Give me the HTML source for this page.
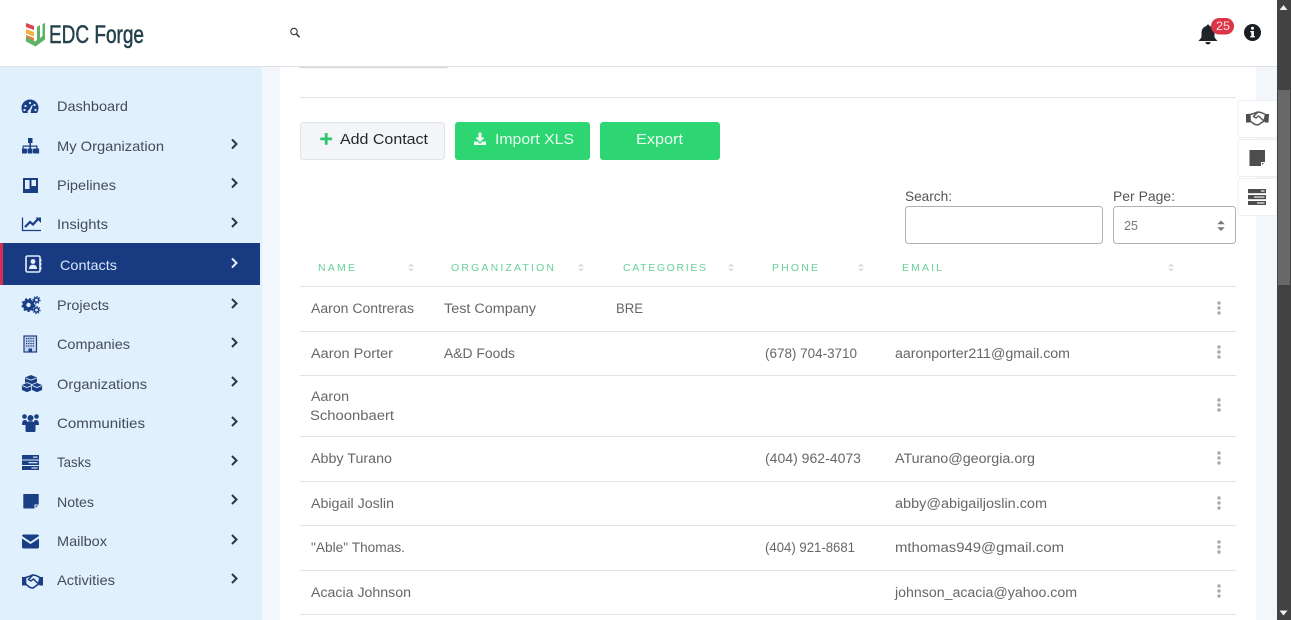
<!DOCTYPE html>
<html lang="en"><head><meta charset="utf-8"><title>EDC Forge - Contacts</title>
<style>
html,body{margin:0;padding:0;width:1291px;height:620px;overflow:hidden;background:#fff}
svg{display:block}
text{font-family:"Liberation Sans",sans-serif}
.n{font-size:14px;fill:#454b5a}
.t{font-size:13.5px;fill:#676767}
.h{font-size:10.5px;fill:#66d197}
.l{font-size:14px;fill:#555}
.b{font-size:15px;fill:#e8fbf0}
.ic{fill:#1b3f85}
.ch{fill:none;stroke:#2a3548;stroke-width:2}
.sort{fill:#d9d9d9}
.dot{fill:#aaa}
.ln{fill:#e2e2e2}
.g{fill:#4d4d4d}
</style></head><body>
<svg width="1291" height="620" viewBox="0 0 1291 620" xmlns="http://www.w3.org/2000/svg">
<rect width="1291" height="620" fill="#fff"/>
<!-- page background -->
<rect x="262" y="67" width="18" height="553" fill="#f3f6fa"/>
<rect x="1256" y="67" width="21" height="553" fill="#f3f6fa"/>
<!-- sidebar -->
<rect x="0" y="67" width="262" height="553" fill="#e1f0fd"/>
<rect x="0" y="243" width="260" height="42" fill="#173a80"/>
<rect x="0" y="243" width="3" height="42" fill="#d5304f"/>
<!-- header -->
<rect x="0" y="0" width="1277" height="66" fill="#fff"/>
<rect x="0" y="66" width="1277" height="1" fill="#dfe1e4"/>
<!-- logo -->
<path d="M26 29l8 3v4.500l-8-3z" fill="#f2b33d"/>
<path d="M26 23l8 3v4l-8-3z" fill="#d9434f"/>
<path d="M26 35l8 3v3l-8-3z" fill="#ec7a3a"/>
<path d="M45 22.500v17l-9.500 7-9.500-5v-4.500l9 4.500 2-1.500v-13l3-2v13l2.500-2v-11.500z" fill="#5cb566"/>
<text x="49" y="43" font-size="25" fill="#24414c" stroke="#24414c" stroke-width=".5" textLength="95" lengthAdjust="spacingAndGlyphs">EDC Forge</text>
<!-- search icon -->
<circle cx="294" cy="31.500" r="3.200" fill="none" stroke="#333" stroke-width="1.100"/>
<path d="M296.500 34l3 3.200" stroke="#333" stroke-width="1.500" fill="none"/>
<!-- bell -->
<path d="M1208 24.500c1 0 1.500.7 1.500 1.500 3.300.8 5 3.500 5 7v3.500c0 1.500 2 3 3 4.500h-19c1-1.500 3-3 3-4.500V33c0-3.500 1.700-6.200 5-7 0-.8.500-1.500 1.500-1.500z" fill="#1f2529"/>
<path d="M1205.500 42h5a2.500 2.500 0 0 1-5 0z" fill="#1f2529"/>
<rect x="1211" y="18" width="23" height="16.500" rx="8.200" fill="#dc3545"/>
<text x="1216" y="30" font-size="12" fill="#fbe3e6" textLength="14" lengthAdjust="spacingAndGlyphs">25</text>
<!-- info -->
<circle cx="1252.500" cy="32.500" r="8.500" fill="#1a1e22"/>
<rect x="1251.300" y="31" width="2.600" height="6.200" fill="#fff"/>
<rect x="1250.300" y="36" width="4.500" height="1.400" fill="#fff"/>
<rect x="1250.300" y="31" width="3" height="1.300" fill="#fff"/>
<circle cx="1252.500" cy="28.300" r="1.500" fill="#fff"/>
<!-- sidebar icons -->
<path class="ic" d="M30 99.500a8.500 8 0 0 0-8.500 8c0 2.200.6 4 1.500 5.500h14c.9-1.500 1.500-3.300 1.500-5.500a8.500 8 0 0 0-8.500-8z"/>
<g fill="#e1f0fd"><circle cx="30" cy="103" r="1.100"/><circle cx="25.500" cy="106" r="1.100"/><circle cx="34.500" cy="105" r="1.100"/><circle cx="24.500" cy="110" r="1.100"/><circle cx="35.500" cy="110" r="1.100"/><path d="M29 110l3-5 .8.400-2 5.600a1.700 1.700 0 1 1-1.800-1z"/></g>
<path class="ic" d="M28 138h4.500v5H31v2.500h6.500v3h1.600v5H35v-5h1.300v-1.800H31v1.800h1.300v5H28v-5h1.400v-1.800h-5.700v1.800H25v5h-3v-5h.6v-3h6.800V143H28z"/>
<rect class="ic" x="33" y="148.500" width="6" height="5" rx="1"/><rect class="ic" x="27.500" y="148.500" width="5" height="5" rx="1"/><rect class="ic" x="22" y="148.500" width="5" height="5" rx="1"/>
<path class="ic" fill-rule="evenodd" d="M23 178h15v15H23zM25 180v9h4.500v-9zM31.500 180v6H36v-6z"/>
<path d="M22.500 217.500V230.500H41" fill="none" stroke="#1b3f85" stroke-width="1.300"/>
<path d="M25 227l5-5 3 2.500 5-5.500" fill="none" stroke="#1b3f85" stroke-width="2.200"/><path class="ic" d="M35.500 217.500H41v5.500z"/>
<rect x="26" y="256" width="14" height="16" rx="1.500" fill="none" stroke="#e6eefc" stroke-width="1.600"/>
<circle cx="33" cy="261.500" r="2.400" fill="#e6eefc"/><path d="M29 269c0-3 1.500-4.300 4-4.300s4 1.300 4 4.300z" fill="#e6eefc"/>
<rect x="40" y="259" width="1.500" height="2.500" fill="#e6eefc"/><rect x="40" y="263" width="1.500" height="2.500" fill="#e6eefc"/><rect x="40" y="267" width="1.500" height="2.500" fill="#e6eefc"/>
<circle cx="28.500" cy="305" r="4" fill="none" stroke="#1b3f85" stroke-width="3.600"/>
<circle cx="28.500" cy="305" r="6.300" fill="none" stroke="#1b3f85" stroke-width="1.500" stroke-dasharray="2.200 2.100"/>
<circle cx="36.500" cy="300" r="2.200" fill="none" stroke="#1b3f85" stroke-width="1.700"/>
<circle cx="36.500" cy="310" r="2.200" fill="none" stroke="#1b3f85" stroke-width="1.700"/>
<circle cx="36.500" cy="300" r="3.600" fill="none" stroke="#1b3f85" stroke-width="1" stroke-dasharray="1.300 1.500"/>
<circle cx="36.500" cy="310" r="3.600" fill="none" stroke="#1b3f85" stroke-width="1" stroke-dasharray="1.300 1.500"/>
<rect x="24" y="336" width="12.500" height="16" fill="#c3d4ee" stroke="#1b3f85" stroke-width="1.200"/>
<path d="M26 338.500h8.500M26 341h8.500M26 343.500h8.500M26 346h8.500" stroke="#1b3f85" stroke-width="1.300" stroke-dasharray="1.300 .9"/>
<rect class="ic" x="28.500" y="348.500" width="3.500" height="3.500"/>
<path class="ic" d="M31 375l6 2.500v6l-6 2.500-6-2.500v-6z"/>
<path class="ic" d="M27 382.500l5.500 2.300v5.500l-5.500 2.300-5.500-2.300v-5.500z" stroke="#e1f0fd" stroke-width=".8"/>
<path class="ic" d="M37 382.500l5.500 2.300v5.500l-5.500 2.300-5.500-2.300v-5.500z" stroke="#e1f0fd" stroke-width=".8"/>
<path d="M25.500 378l5.500 2.200 5.500-2.200M22 385.500l5 2 5-2M32 385.500l5 2 5-2" fill="none" stroke="#e1f0fd" stroke-width=".9"/>
<circle class="ic" cx="30.500" cy="418" r="3"/><circle class="ic" cx="24.500" cy="416.500" r="2.300"/><circle class="ic" cx="36.500" cy="416.500" r="2.300"/>
<path class="ic" d="M22 425c0-3 .8-5 2.500-5 1 0 2 .4 2.500.8v4.200zM39 425c0-3-.8-5-2.500-5-1 0-2 .4-2.500.8v4.200z"/>
<path class="ic" d="M25.500 431v-6c0-2.500 1.500-3.800 5-3.800s5 1.300 5 3.800v6c0 .5-.5 1-1.500 1h-7c-1 0-1.500-.5-1.500-1z"/>
<rect class="ic" x="22" y="455" width="17" height="4.500"/><rect class="ic" x="22" y="460.500" width="17" height="4.500"/><rect class="ic" x="22" y="466" width="17" height="4"/>
<g fill="#c8d8f0"><rect x="33" y="456.500" width="4.500" height="1.300"/><rect x="28.500" y="462" width="9" height="1.300"/><rect x="31.500" y="467.300" width="6" height="1.300"/></g>
<path class="ic" d="M24 494h14c.5 0 .7.300.7.700V505l-4 3.500H24c-.5 0-.7-.3-.7-.7V494.700c0-.4.200-.7.700-.7z"/>
<path d="M35 508.500v-3.500h3.700" fill="none" stroke="#e1f0fd" stroke-width="1.100"/>
<path class="ic" d="M23.500 534.500h14c.8 0 1.500.7 1.500 1.500l-8.500 5.800L22 536c0-.8.700-1.500 1.500-1.500z"/>
<path class="ic" d="M22 538.500l8.500 5.500 8.500-5.500v8.500c0 .8-.7 1.500-1.500 1.500h-14c-.8 0-1.500-.7-1.500-1.500z"/>
<g>
<path class="ic" d="M22 577h3l1.500 6.500-1 2H22zM43 577h-3l-1.500 6.500 1 2H43z"/>
<path d="M25.500 577.500L29 576.500 32.500 575 36 575.500 40 577.500 38.500 584 33 588 30 587.500 25.500 584z" fill="none" stroke="#1b3f85" stroke-width="1.600"/>
<path d="M32.500 575.500L28.500 579.500 31 581 33.500 579 38 583.500" fill="none" stroke="#1b3f85" stroke-width="1.500"/>
</g>
<!-- chevrons -->
<g class="ch"><path d="M232 139.500l4.500 4.500-4.500 4.500"/><path d="M232 178.500l4.500 4.500-4.500 4.500"/><path d="M232 218l4.500 4.500-4.500 4.500"/><path d="M232 258.500l4.500 4.500-4.500 4.500" stroke="#e6eefc"/><path d="M232 299l4.500 4.500-4.500 4.500"/><path d="M232 338l4.500 4.500-4.500 4.500"/><path d="M232 377l4.500 4.500-4.500 4.500"/><path d="M232 417l4.500 4.500-4.500 4.500"/><path d="M232 456l4.500 4.500-4.500 4.500"/><path d="M232 495l4.500 4.500-4.500 4.500"/><path d="M232 535l4.500 4.500-4.500 4.500"/><path d="M232 574l4.500 4.500-4.500 4.500"/></g>
<!-- sidebar labels -->
<text class="n" x="57" y="111" textLength="71" lengthAdjust="spacingAndGlyphs">Dashboard</text>
<text class="n" x="57" y="151" textLength="107" lengthAdjust="spacingAndGlyphs">My Organization</text>
<text class="n" x="57" y="190" textLength="59" lengthAdjust="spacingAndGlyphs">Pipelines</text>
<text class="n" x="57" y="229" textLength="51" lengthAdjust="spacingAndGlyphs">Insights</text>
<text class="n" x="60" y="270" textLength="57" lengthAdjust="spacingAndGlyphs" style="fill:#d9e6fb">Contacts</text>
<text class="n" x="57" y="310" textLength="52" lengthAdjust="spacingAndGlyphs">Projects</text>
<text class="n" x="57" y="349" textLength="73" lengthAdjust="spacingAndGlyphs">Companies</text>
<text class="n" x="57" y="389" textLength="90" lengthAdjust="spacingAndGlyphs">Organizations</text>
<text class="n" x="57" y="428" textLength="88" lengthAdjust="spacingAndGlyphs">Communities</text>
<text class="n" x="57" y="467" textLength="34" lengthAdjust="spacingAndGlyphs">Tasks</text>
<text class="n" x="57" y="507" textLength="37" lengthAdjust="spacingAndGlyphs">Notes</text>
<text class="n" x="57" y="546" textLength="50" lengthAdjust="spacingAndGlyphs">Mailbox</text>
<text class="n" x="57" y="585" textLength="58" lengthAdjust="spacingAndGlyphs">Activities</text>
<!-- clipped button -->
<path d="M299.500 66.500c0 .8 1.500 1.200 3 1.200h142c1.500 0 3-.4 3-1.200" fill="none" stroke="#cfcfcf" stroke-width="1"/>
<rect x="300" y="97" width="936" height="1" class="ln"/>
<!-- buttons -->
<rect x="300.500" y="122.500" width="144" height="37" rx="3" fill="#f3f5f9" stroke="#dfe3ea"/>
<path d="M324.800 133h2.800v4.500h4.500v2.800h-4.500v4.500h-2.800v-4.500h-4.500v-2.800h4.500z" fill="#2fc46f"/>
<text x="340" y="144" font-size="15" fill="#24272b" textLength="88" lengthAdjust="spacingAndGlyphs">Add Contact</text>
<rect x="455" y="122" width="135" height="38" rx="3" fill="#2ed573"/>
<path d="M478.500 132.500h3v5h3l-4.500 5-4.500-5h3zM474 141.500h3.500l2.500 2.500 2.500-2.500h3.500v3.500h-12z" fill="#eefcf3"/>
<text class="b" x="495" y="144" textLength="79" lengthAdjust="spacingAndGlyphs">Import XLS</text>
<rect x="600" y="122" width="120" height="38" rx="3" fill="#2ed573"/>
<text class="b" x="636" y="144" textLength="47" lengthAdjust="spacingAndGlyphs">Export</text>
<!-- filters -->
<text class="l" x="905" y="201" textLength="47" lengthAdjust="spacingAndGlyphs">Search:</text>
<rect x="905.500" y="206.500" width="197" height="37" rx="3" fill="#fff" stroke="#b0b0b0"/>
<text class="l" x="1113" y="201" textLength="62" lengthAdjust="spacingAndGlyphs">Per Page:</text>
<rect x="1113.500" y="206.500" width="122" height="37" rx="3" fill="#fff" stroke="#b0b0b0"/>
<text x="1124" y="230" font-size="12.500" fill="#777" textLength="14" lengthAdjust="spacingAndGlyphs">25</text>
<path d="M1221 220.500l3.800 3.800h-7.600zM1221 231l3.800-3.800h-7.600z" fill="#777"/>
<!-- side widgets -->
<g fill="#fff" stroke="#eceef1"><path d="M1277 100.500h-36a3 3 0 0 0-3 3v31a3 3 0 0 0 3 3h36z"/><path d="M1277 139.500h-36a3 3 0 0 0-3 3v31a3 3 0 0 0 3 3h36z"/><path d="M1277 178.500h-36a3 3 0 0 0-3 3v31a3 3 0 0 0 3 3h36z"/></g>
<g transform="translate(1225 -463)">
<path class="g" d="M21 577h3.500l1.500 6.500-1 2H21zM44 577h-3.500l-1.500 6.500 1 2h3.500z"/>
<path d="M25 577.500L29 576.500 32.500 575 36 575.500 40.500 577.500 39 584 33 588 30 587.500 25 584z" fill="none" stroke="#555" stroke-width="1.500"/>
<path d="M32.500 575.500L28.500 579.500 31 581 33.500 579 38.500 583.500" fill="none" stroke="#555" stroke-width="1.400"/>
</g>
<path class="g" d="M1249.500 150h15.500v12l-4 4h-11.500z"/>
<path d="M1261.500 166v-3.500h3.500" fill="none" stroke="#fff" stroke-width="1.100"/>
<rect class="g" x="1248" y="189" width="18" height="4.200"/><rect class="g" x="1248" y="195" width="18" height="4.200"/><rect class="g" x="1248" y="201" width="18" height="4"/>
<g fill="#cfcfcf"><rect x="1261" y="190.300" width="3.500" height="1.500"/><rect x="1254" y="196.300" width="10.500" height="1.500"/><rect x="1257" y="202.200" width="7.500" height="1.500"/></g>
<!-- table header -->
<text class="h" x="318" y="271" textLength="37">NAME</text>
<text class="h" x="451" y="271" textLength="103">ORGANIZATION</text>
<text class="h" x="623" y="271" textLength="83">CATEGORIES</text>
<text class="h" x="772" y="271" textLength="46">PHONE</text>
<text class="h" x="902" y="271" textLength="40">EMAIL</text>
<g class="sort"><path d="M411 263.500l3 3h-6zM411 271.500l3-3h-6z"/><path d="M581 263.500l3 3h-6zM581 271.500l3-3h-6z"/><path d="M731 263.500l3 3h-6zM731 271.500l3-3h-6z"/><path d="M861 263.500l3 3h-6zM861 271.500l3-3h-6z"/><path d="M1171 263.500l3 3h-6zM1171 271.500l3-3h-6z"/></g>
<!-- rows -->
<g class="ln"><rect x="300" y="286" width="936" height="1"/><rect x="300" y="331" width="936" height="1"/><rect x="300" y="375" width="936" height="1"/><rect x="300" y="436" width="936" height="1"/><rect x="300" y="481" width="936" height="1"/><rect x="300" y="525" width="936" height="1"/><rect x="300" y="570" width="936" height="1"/><rect x="300" y="614" width="936" height="1"/></g>
<text class="t" x="311" y="313" textLength="103" lengthAdjust="spacingAndGlyphs">Aaron Contreras</text>
<text class="t" x="444" y="313" textLength="92" lengthAdjust="spacingAndGlyphs">Test Company</text>
<text class="t" x="616" y="313" textLength="27" lengthAdjust="spacingAndGlyphs">BRE</text>
<text class="t" x="311" y="358" textLength="82" lengthAdjust="spacingAndGlyphs">Aaron Porter</text>
<text class="t" x="444" y="358" textLength="71" lengthAdjust="spacingAndGlyphs">A&amp;D Foods</text>
<text class="t" x="765" y="358" textLength="92" lengthAdjust="spacingAndGlyphs">(678) 704-3710</text>
<text class="t" x="895" y="358" textLength="175" lengthAdjust="spacingAndGlyphs">aaronporter211@gmail.com</text>
<text class="t" x="311" y="401" textLength="38" lengthAdjust="spacingAndGlyphs">Aaron</text>
<text class="t" x="310" y="420" textLength="84" lengthAdjust="spacingAndGlyphs">Schoonbaert</text>
<text class="t" x="311" y="463" textLength="81" lengthAdjust="spacingAndGlyphs">Abby Turano</text>
<text class="t" x="765" y="463" textLength="96" lengthAdjust="spacingAndGlyphs">(404) 962-4073</text>
<text class="t" x="895" y="463" textLength="140" lengthAdjust="spacingAndGlyphs">ATurano@georgia.org</text>
<text class="t" x="311" y="508" textLength="83" lengthAdjust="spacingAndGlyphs">Abigail Joslin</text>
<text class="t" x="895" y="508" textLength="152" lengthAdjust="spacingAndGlyphs">abby@abigailjoslin.com</text>
<text class="t" x="311" y="552" textLength="94" lengthAdjust="spacingAndGlyphs">"Able" Thomas.</text>
<text class="t" x="765" y="552" textLength="90" lengthAdjust="spacingAndGlyphs">(404) 921-8681</text>
<text class="t" x="895" y="552" textLength="169" lengthAdjust="spacingAndGlyphs">mthomas949@gmail.com</text>
<text class="t" x="311" y="597" textLength="100" lengthAdjust="spacingAndGlyphs">Acacia Johnson</text>
<text class="t" x="895" y="597" textLength="182" lengthAdjust="spacingAndGlyphs">johnson_acacia@yahoo.com</text>
<!-- kebabs -->
<g class="dot">
<circle cx="1219" cy="303" r="1.700"/><circle cx="1219" cy="308" r="1.700"/><circle cx="1219" cy="313" r="1.700"/>
<circle cx="1219" cy="347" r="1.700"/><circle cx="1219" cy="352" r="1.700"/><circle cx="1219" cy="357" r="1.700"/>
<circle cx="1219" cy="400" r="1.700"/><circle cx="1219" cy="405" r="1.700"/><circle cx="1219" cy="410" r="1.700"/>
<circle cx="1219" cy="453" r="1.700"/><circle cx="1219" cy="458" r="1.700"/><circle cx="1219" cy="463" r="1.700"/>
<circle cx="1219" cy="498" r="1.700"/><circle cx="1219" cy="503" r="1.700"/><circle cx="1219" cy="508" r="1.700"/>
<circle cx="1219" cy="542" r="1.700"/><circle cx="1219" cy="547" r="1.700"/><circle cx="1219" cy="552" r="1.700"/>
<circle cx="1219" cy="586" r="1.700"/><circle cx="1219" cy="591" r="1.700"/><circle cx="1219" cy="596" r="1.700"/>
</g>
<!-- scrollbar -->
<rect x="1277" y="0" width="14" height="620" fill="#424242"/>
<rect x="1278" y="90" width="12" height="195" fill="#686868"/>
<path d="M1283.500 5l4 5h-8z" fill="#eee"/>
<path d="M1283.500 615.500l4-5h-8z" fill="#eee"/>
</svg>
</body></html>
